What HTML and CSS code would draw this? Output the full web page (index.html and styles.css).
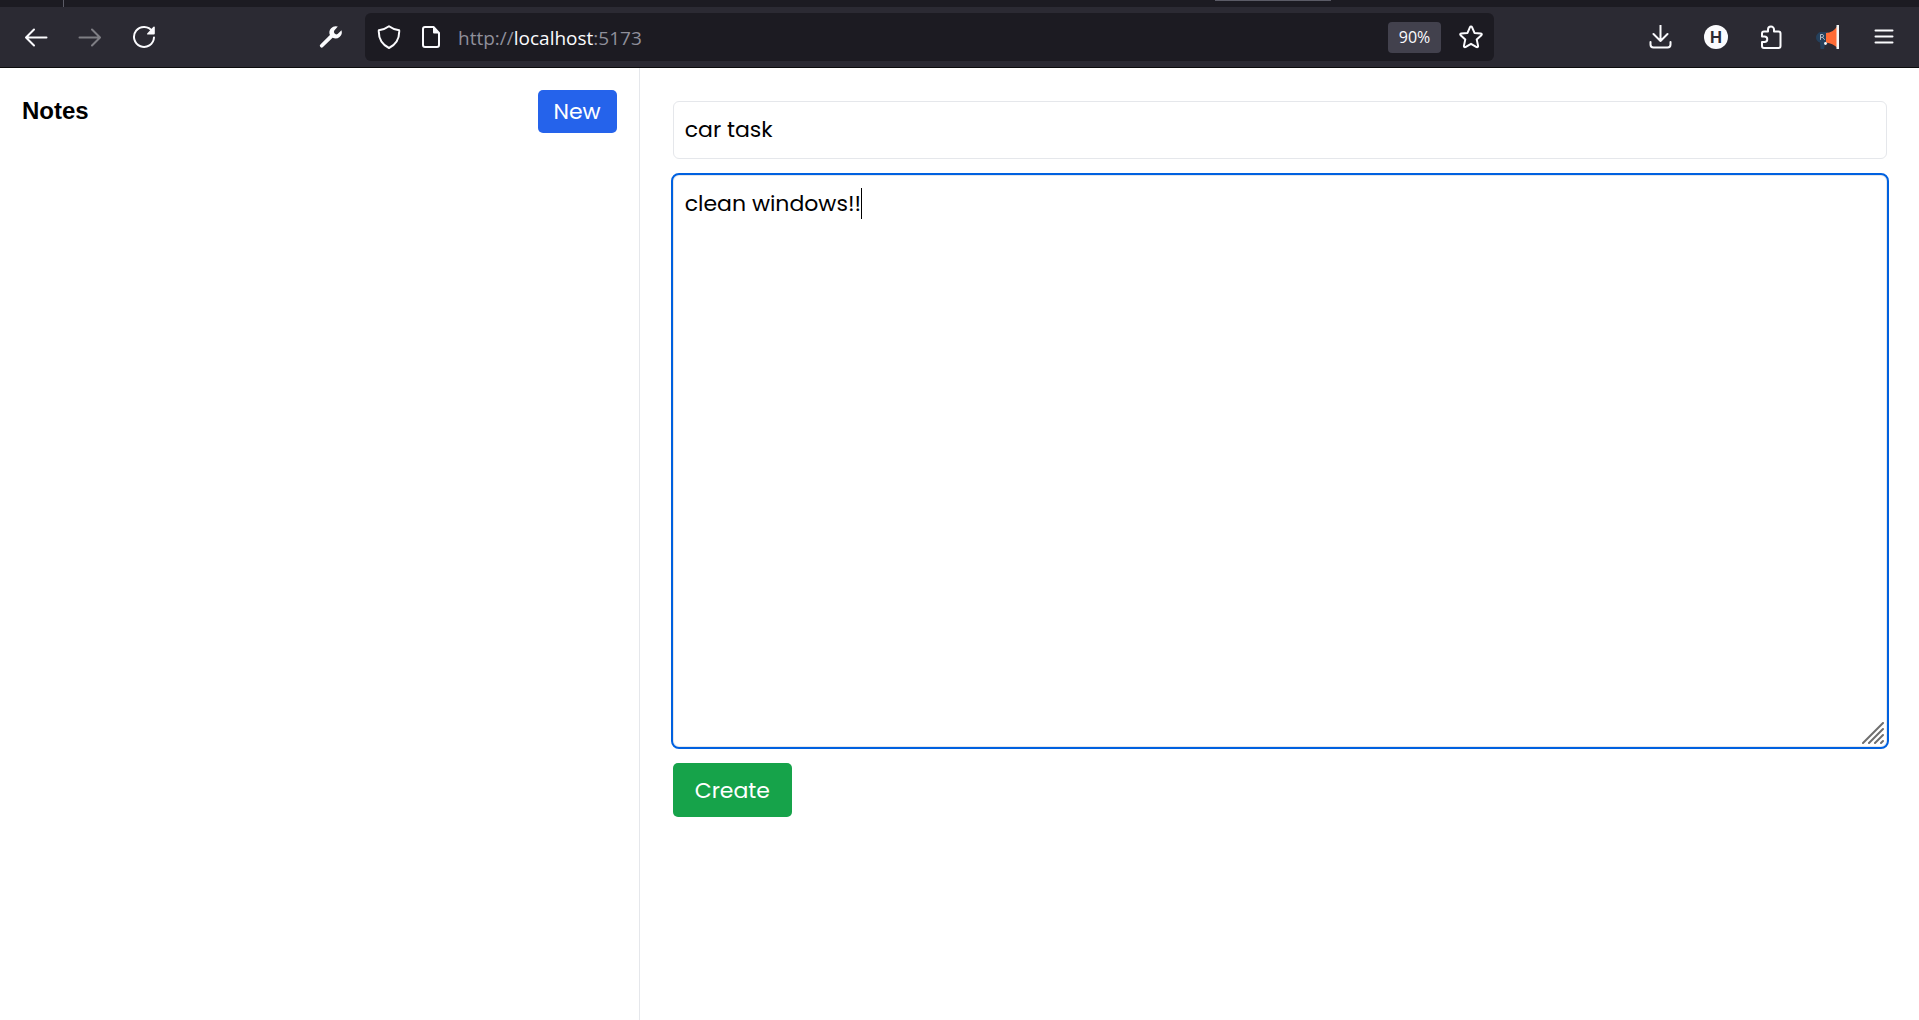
FILE: index.html
```html
<!DOCTYPE html>
<html lang="en">
<head>
<meta charset="utf-8">
<title>Notes</title>
<link rel="stylesheet" href="styles.css">
</head>
<body>
<header class="browser">
  <div class="tab-strip"><span class="tab-divider"></span><span class="tab-preview"></span></div>
  <div class="toolbar">
    <button class="tool" aria-label="Back"><svg class="icon" viewBox="0 0 24 24"><path d="M22.5 12.5H2.5M10 4.5l-8 8 8 8"/></svg></button>
    <button class="tool" aria-label="Forward" disabled><svg class="icon" viewBox="0 0 24 24"><path d="M1.5 12.5h20M14 4.5l8 8-8 8"/></svg></button>
    <button class="tool" aria-label="Reload"><svg class="icon" viewBox="0 0 24 24"><path d="M20.3 6.3A10 10 0 1 0 22 12.5"/><path class="solid" d="M22.8 2v6.6q0 .9-.9.9h-6.4q-1-.3-.3-1.1l6.2-6.6q1-.8 1.4.2z"/></svg></button>
    <span class="spacer-left"></span>
    <button class="tool" aria-label="Developer tools"><svg class="icon" viewBox="0 0 24 24"><path class="solid" d="M18.8 1.6a6.3 6.3 0 0 0-7.9 8.4L1.4 19.6a1.7 1.7 0 0 0 0 2.500q1.300 1.300 2.600 0L13.600 12.700A6.300 6.300 0 0 0 22.500 5.200L18.600 9q-1.700 1-3-.400t-.300-3z"/></svg></button>
    <div class="address-bar">
      <svg class="icon" viewBox="0 0 24 24"><path d="M12 1.200Q16.500 4.600 22.200 5.200 22.800 17.600 12 23 1.200 17.600 1.800 5.200 7.500 4.600 12 1.200z"/></svg>
      <svg class="icon page-icon" viewBox="0 0 24 24"><path d="M14.500 2H6Q4 2 4 4v16q0 2 2 2h12q2 0 2-2V8z"/><path class="solid" d="M14 2l6.500 6.500H15q-1 0-1-1z"/></svg>
      <div class="url" role="textbox" aria-label="Address" contenteditable="true" spellcheck="false">http://<span class="host">localhost</span>:5173</div>
      <button class="zoom-level">90%</button>
      <button class="bookmark" aria-label="Bookmark this page"><svg class="icon" viewBox="0 0 24 24"><path d="M12 1.500q.700 0 1 .700l2.500 5.700 6.300.600q1.600.400.600 1.700l-4.700 4.200 1.400 6.500q0 1.500-1.500 1.200L12 18.800l-5.600 3.300q-1.500.300-1.500-1.200l1.400-6.500-4.700-4.200q-1-1.300.600-1.700l6.300-.600L11 2.200q.300-.700 1-.700z"/></svg></button>
    </div>
    <span class="spacer-right"></span>
    <button class="tool wide" aria-label="Downloads"><svg class="icon" viewBox="0 0 24 24"><path d="M12.500.500v15.500M5.500 9l7 7 7-7M2.500 17v2.500q0 3 3 3h14q3 0 3-3V17"/></svg></button>
    <button class="tool wide" aria-label="Account"><span class="avatar">H</span></button>
    <button class="tool wide" aria-label="Extensions"><svg class="icon" viewBox="0 0 24 24"><path d="M8 6.500V4.500a3 3 0 0 1 6 0v2h4.500q2 0 2 2V21q0 2-2 2H4q-2 0-2-2v-4h2.500a2.700 2.700 0 0 0 0-5.500H2v-3q0-2 2-2z"/></svg></button>
    <button class="tool wide" aria-label="Announcements"><svg class="icon" viewBox="0 0 24 24"><path class="navy" d="M4 7h8v12l-3 .500-1 4.500H4.500L4 17.500Q0 16 0 12.500T4 7z"/><path class="orange" d="M10 8q7 0 11-6.500v21Q17 18.500 10 17.500z"/><path class="edge" d="M20.500 0h2.500v24h-2.500z"/><circle class="edge" cx="9.500" cy="18.500" r="1.400"/><path class="mark" d="M4.500 14.500V9.500h2.300q1.700 1.300 0 2.800H4.500M6.500 12.300l2 2.200"/></svg></button>
    <button class="tool wide" aria-label="Menu"><svg class="icon" viewBox="0 0 24 24"><path d="M3.500 5.500h17M3.500 11.500h17M3.500 17.500h17"/></svg></button>
  </div>
</header>
<main class="app">
  <aside class="sidebar">
    <h1 class="title">Notes</h1>
    <button class="btn btn-new">New</button>
  </aside>
  <form class="editor">
    <input class="field" type="text" aria-label="Title" value="car task">
    <div class="body-wrap">
      <textarea class="field body-field" aria-label="Content" spellcheck="false">clean windows!!</textarea>
      <span class="caret"></span>
      <svg class="grip" viewBox="0 0 22 22"><path d="M1 21L21 1M7 21L21 7M13 21l8-8M19 21l2-2"/></svg>
    </div>
    <button class="btn btn-create" type="button">Create</button>
  </form>
</main>
</body>
</html>
```
FILE: styles.css
```css
* { box-sizing: border-box; }
body {
  margin: 0;
  min-height: 100vh;
  display: flex;
  flex-direction: column;
  background: #fff;
  color: #000;
  font-family: Poppins, Inter, sans-serif;
  font-size: 22px;
}
button { font: inherit; border: 0; padding: 0; background: none; color: inherit; cursor: pointer; }

/* Browser chrome */
.browser { background: #2b2a33; color: #fbfbfe; border-bottom: 1px solid #0c0c0d; }
.tab-strip { display: flex; height: 7px; background: #1c1b22; }
.tab-divider { width: 64px; border-right: 1px solid #5b5b66; }
.tab-preview { margin-left: 60%; width: 116px; height: 1px; background: #5b5b66; }
.toolbar { display: flex; align-items: center; height: 60px; padding: 0 7px 0 9px; }
.tool { display: flex; align-items: center; justify-content: center; width: 54px; height: 48px; flex: none; }
.tool.wide { width: 56px; }
.tool:disabled { opacity: .4; }
.spacer-left { flex: 133 1 0; }
.spacer-right { flex: 138 1 0; }
.icon { display: block; width: 24px; height: 24px; flex: none; fill: none; stroke: currentColor; stroke-width: 2; stroke-linecap: round; stroke-linejoin: round; }
.icon .solid { fill: currentColor; stroke: none; }
.icon .navy { fill: #25405c; stroke: none; }
.icon .orange { fill: #ff6b35; stroke: none; }
.icon .edge { fill: #f3f6f7; stroke: none; }
.icon .mark { stroke: #b5bec8; stroke-width: 1; }
.address-bar {
  flex: 1106 1 0;
  min-width: 0;
  display: flex;
  align-items: center;
  height: 48px;
  margin-left: 7px;
  padding: 0 11px 0 12px;
  border-radius: 6px;
  background: #1c1b22;
  font-family: "Segoe UI", "Open Sans", sans-serif;
}
.page-icon { margin-left: 18px; }
.url { flex: 1; margin-left: 15px; padding-top: 2px; color: #8f8f9a; font-size: 19px; outline: 0; white-space: nowrap; }
.host { color: #fbfbfe; }
.zoom-level { width: 53px; height: 31px; border-radius: 4px; background: #42414d; font-size: 16px; }
.bookmark { margin-left: 18px; }
.avatar {
  width: 24px;
  height: 24px;
  border-radius: 50%;
  background: #fbfbfe;
  color: #2b2a33;
  font: 700 16px/24px Inter, sans-serif;
  text-align: center;
}

/* Notes application */
.app { flex: 1; display: flex; }
.sidebar {
  flex: 0 0 33.3333%;
  display: flex;
  align-items: flex-start;
  justify-content: space-between;
  padding: 22px;
  border-right: 1px solid #e5e7eb;
}
.title { margin: 0; font: 700 24px/42px "Liberation Sans", Arial, sans-serif; }
.btn { color: #fff; border-radius: 5px; }
.btn-new { height: 43px; padding: 0 16px; background: #2563eb; }
.editor { flex: 1; min-width: 0; display: flex; flex-direction: column; align-items: flex-start; gap: 16px; padding: 33px 32px 33px 33px; }
.field {
  display: block;
  width: 100%;
  margin: 0;
  padding: 11px;
  border: 1px solid #e5e7eb;
  border-radius: 6px;
  outline: 0;
  background: #fff;
  color: inherit;
  font: inherit;
  line-height: 34px;
}
.body-wrap { position: relative; width: 100%; }
.body-field { height: 572px; resize: none; outline: 2px solid #0061e0; }
.caret { position: absolute; left: 188px; top: 13px; width: 1px; height: 31px; background: #000; }
.grip { position: absolute; right: 3px; bottom: 3px; width: 22px; height: 22px; fill: none; stroke: #6f6f6f; stroke-width: 2; stroke-linecap: round; }
.btn-create { height: 54px; padding: 0 22px; background: #16a34a; }
```
